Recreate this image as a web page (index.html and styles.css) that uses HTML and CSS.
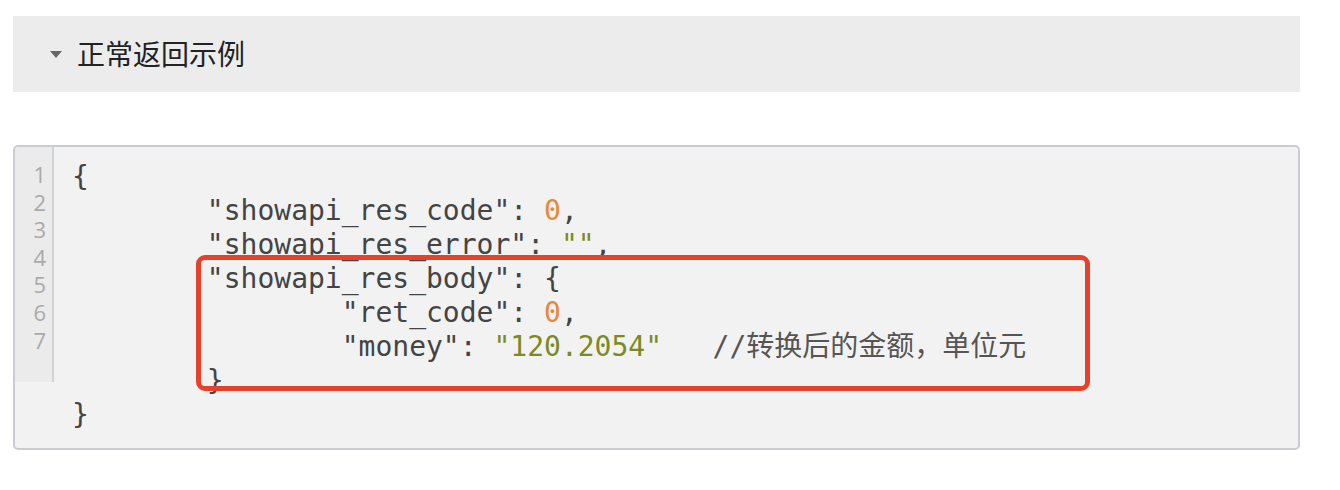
FILE: index.html
```html
<!DOCTYPE html>
<html lang="zh-CN">
<head>
<meta charset="utf-8">
<title>正常返回示例</title>
<link rel="stylesheet" href="styles.css">
</head>
<body>
<div class="page">
  <div class="section-head">
    <span class="caret"></span>
    <span class="section-title">正常返回示例</span>
  </div>
  <div class="code-box">
    <div class="gutter"><div>1</div><div>2</div><div>3</div><div>4</div><div>5</div><div>6</div><div>7</div></div>
<pre class="code">{
        <span class="k">"showapi_res_code"</span>: <span class="n">0</span>,
        <span class="k">"showapi_res_error"</span>: <span class="s">""</span>,
        <span class="k">"showapi_res_body"</span>: {
                <span class="k">"ret_code"</span>: <span class="n">0</span>,
                <span class="k">"money"</span>: <span class="s">"120.2054"</span>   <span class="c">//转换后的金额，单位元</span>
        }
}</pre>
    <div class="highlight"></div>
  </div>
</div>
</body>
</html>
```
FILE: styles.css
```css
html, body {
  margin: 0;
  padding: 0;
  background: #ffffff;
}
.page {
  padding: 16px 40px 0 13px;
}
.section-head {
  width: 1287px;
  height: 76px;
  background: #ececec;
  display: flex;
  align-items: center;
  box-sizing: border-box;
  padding-left: 37px;
}
.caret {
  width: 0;
  height: 0;
  border-left: 6.5px solid transparent;
  border-right: 6.5px solid transparent;
  border-top: 7px solid #666666;
  margin-right: 15px;
  margin-top: 1px;
}
.section-title {
  font-family: "Noto Sans CJK SC", "Noto Sans", sans-serif;
  font-size: 28px;
  color: #222222;
  line-height: 1;
  margin-top: -2px;
}
.code-box {
  position: relative;
  margin-top: 53px;
  width: 1287px;
  height: 305px;
  box-sizing: border-box;
  border: 2px solid #c9cdd1;
  border-radius: 5px;
  background: #f2f2f2;
  display: flex;
  align-items: flex-start;
}
.gutter {
  width: 39px;
  box-sizing: border-box;
  padding: 14px 6px 28px 0;
  background: #ebebeb;
  border-right: 2px solid #cfd3d6;
  border-top-left-radius: 3px;
  font-family: "Open Sans", "Liberation Sans", sans-serif;
  font-size: 22px;
  line-height: 27.6px;
  color: #aaaaaa;
  text-align: right;
}
.code {
  margin: 0;
  padding: 13px 0 0 18px;
  font-family: "DejaVu Sans Mono", "Noto Sans CJK SC", monospace;
  font-size: 28px;
  line-height: 34px;
  color: #444444;
  white-space: pre;
}
.code .n {
  color: #e8883a;
}
.code .s {
  color: #7b8a22;
}
.code .c {
  color: #555555;
}
.highlight {
  position: absolute;
  left: 181px;
  top: 108px;
  width: 894px;
  height: 136px;
  box-sizing: border-box;
  border: 5px solid #e8412b;
  border-radius: 9px;
}
```
